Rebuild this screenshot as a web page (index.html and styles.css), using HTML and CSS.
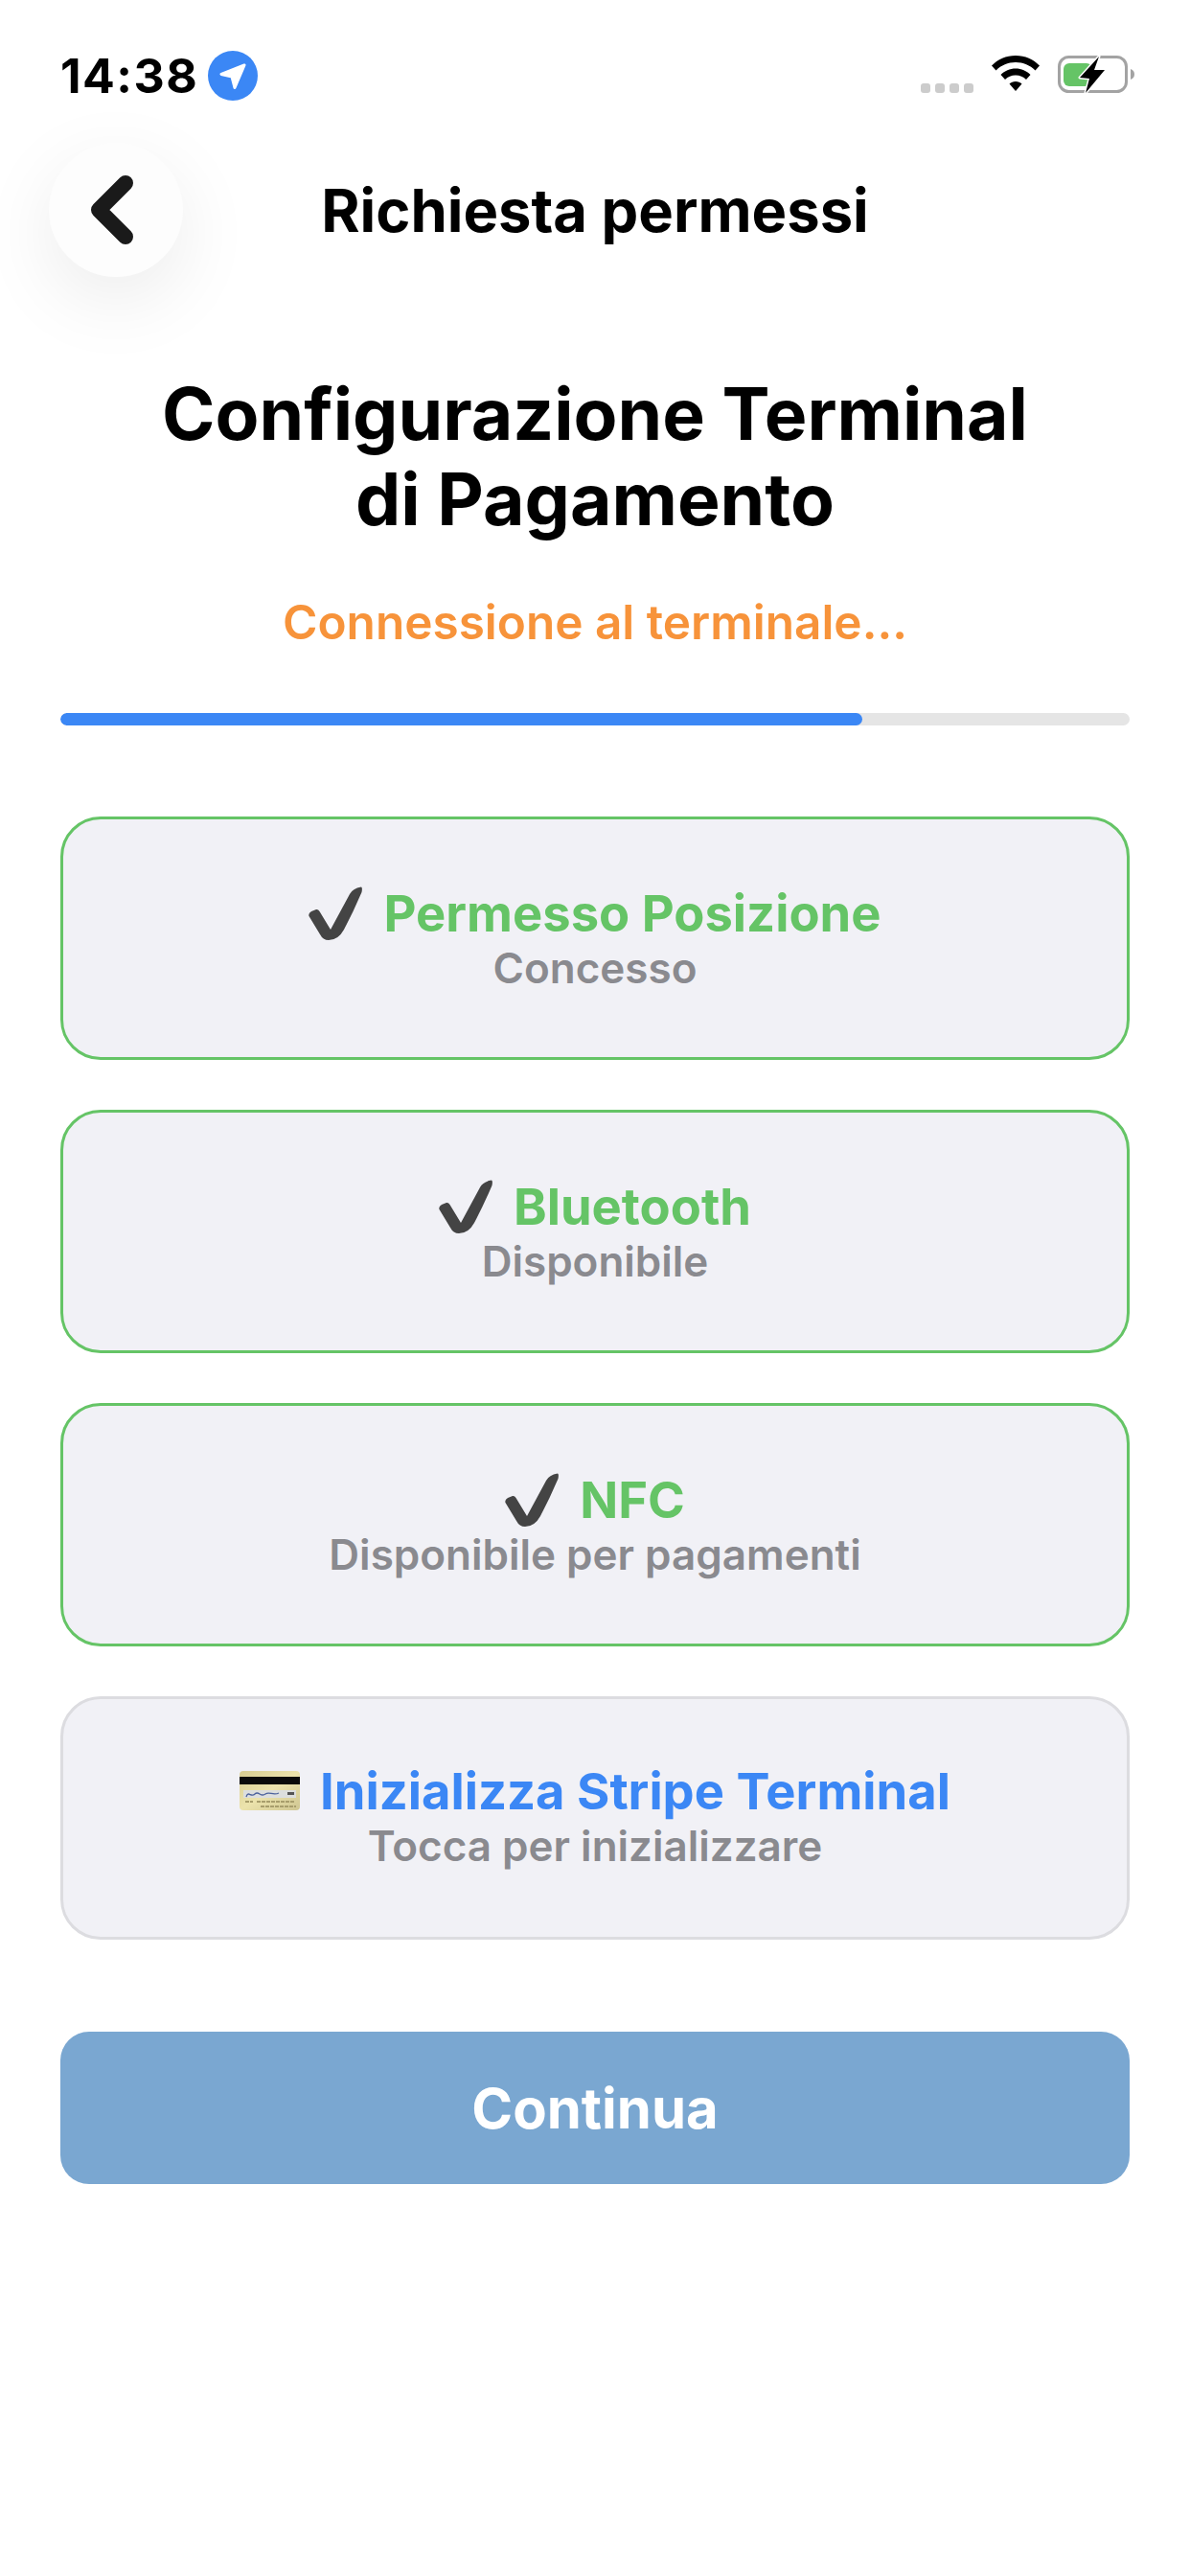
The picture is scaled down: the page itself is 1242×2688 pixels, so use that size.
FILE: index.html
```html
<!DOCTYPE html>
<html lang="it">
<head>
    <meta charset="UTF-8">
    <meta name="viewport" content="width=device-width, initial-scale=1.0">
    <title>Richiesta permessi</title>
    <link rel="stylesheet" href="styles.css">
</head>
<body>
    <div class="status-bar">
        <div class="status-left">
            <span class="clock">14:38</span>
            <svg class="location" viewBox="0 0 52 52" width="52" height="52">
                <circle cx="26" cy="26" r="26" fill="#3b87f5"/>
                <path d="M38 15 L14 24.500 L25 27 L28 38.500 Z" fill="#fff" stroke="#fff" stroke-width="3" stroke-linejoin="round"/>
            </svg>
        </div>
        <div class="status-right">
            <div class="signal"><i></i><i></i><i></i><i></i></div>
            <svg class="wifi" viewBox="0 0 52 38" width="52" height="38">
                <path d="M26 0 C16 0 7.500 4 1 10.500 L5.500 15.500 C11 10 18 7 26 7 C34 7 41 10 46.500 15.500 L51 10.500 C44.500 4 36 0 26 0 Z"/>
                <path d="M26 13.500 C20 13.500 14.500 16 10.500 20 L15 25 C18 22 21.500 20.500 26 20.500 C30.500 20.500 34 22 37 25 L41.500 20 C37.500 16 32 13.500 26 13.500 Z"/>
                <path d="M26 27 C23.500 27 21 28 19.500 29.500 L26 37 L32.500 29.500 C31 28 28.500 27 26 27 Z"/>
            </svg>
            <svg class="battery" viewBox="0 0 80 42" width="80" height="42">
                <rect x="1.500" y="1.500" width="70" height="36" rx="10" fill="none" stroke="#a3a3a3" stroke-width="3"/>
                <path d="M76 14 C79 15 80 17 80 19.500 C80 22 79 24 76 25 Z" fill="#a3a3a3"/>
                <rect x="6" y="8" width="30" height="24" rx="6" fill="#65c466"/>
                <path d="M43 1 L23 23 L33 24 L29 39 L49 15 L38 15 Z" fill="#000" stroke="#fff" stroke-width="3" stroke-linejoin="round" paint-order="stroke"/>
            </svg>
        </div>
    </div>

    <div class="nav-bar">
        <button type="button" class="back-btn">
            <svg viewBox="0 0 50 78" width="50" height="78">
                <path d="M39 11 L11 39 L39 67" fill="none" stroke="#1a1a1a" stroke-width="16" stroke-linecap="round" stroke-linejoin="round"/>
            </svg>
        </button>
        <div class="nav-title">Richiesta permessi</div>
    </div>

    <main class="content">
        <h1>Configurazione Terminal<br>di Pagamento</h1>
        <p class="progress-text">Connessione al terminale...</p>
        <div class="progress-track"><div class="progress-fill"></div></div>

        <div class="perm-list">
            <div class="perm-card done">
                <div class="perm-name">
                    <svg class="check" viewBox="0 0 56 56"><path d="M0.500 31 Q-0.500 28 3 26 L8 24 Q10 23.500 11.500 26 L23 45 L43 8 Q46 2 55 0.500 Q56.500 1 55.500 6 Q47 26 37 45 Q31 56 21 56 Q15 56 12 50 Z" fill="#444"/></svg>
                    <span>Permesso Posizione</span>
                </div>
                <div class="perm-state">Concesso</div>
            </div>
            <div class="perm-card done">
                <div class="perm-name">
                    <svg class="check" viewBox="0 0 56 56"><path d="M0.500 31 Q-0.500 28 3 26 L8 24 Q10 23.500 11.500 26 L23 45 L43 8 Q46 2 55 0.500 Q56.500 1 55.500 6 Q47 26 37 45 Q31 56 21 56 Q15 56 12 50 Z" fill="#444"/></svg>
                    <span>Bluetooth</span>
                </div>
                <div class="perm-state">Disponibile</div>
            </div>
            <div class="perm-card done">
                <div class="perm-name">
                    <svg class="check" viewBox="0 0 56 56"><path d="M0.500 31 Q-0.500 28 3 26 L8 24 Q10 23.500 11.500 26 L23 45 L43 8 Q46 2 55 0.500 Q56.500 1 55.500 6 Q47 26 37 45 Q31 56 21 56 Q15 56 12 50 Z" fill="#444"/></svg>
                    <span>NFC</span>
                </div>
                <div class="perm-state">Disponibile per pagamenti</div>
            </div>
            <div class="perm-card todo">
                <div class="perm-name">
                    <svg class="card-icon" viewBox="0 0 63 42">
                        <defs>
                            <linearGradient id="gold" x1="0" y1="0" x2="1" y2="1">
                                <stop offset="0" stop-color="#d8cd92"/>
                                <stop offset="0.500" stop-color="#ece3ac"/>
                                <stop offset="1" stop-color="#cfc692"/>
                            </linearGradient>
                        </defs>
                        <rect x="0" y="0" width="63" height="41" rx="4" fill="url(#gold)"/>
                        <rect x="0" y="6" width="63" height="8" fill="#0a0a0a"/>
                        <rect x="4" y="20" width="55" height="8" fill="#dcdedd"/>
                        <path d="M7 27 C9 20 12 28 16 24 C20 20 22 28 27 24 C31 21 35 26 41 23" fill="none" stroke="#4c629c" stroke-width="1.300"/>
                        <rect x="50" y="22" width="7" height="3" fill="#555"/>
                        <path d="M6 32 H14 M18 32 H57 M22 37 H59" stroke="#a89e6c" stroke-width="2" stroke-dasharray="4 1"/>
                    </svg>
                    <span>Inizializza Stripe Terminal</span>
                </div>
                <div class="perm-state">Tocca per inizializzare</div>
            </div>
        </div>

        <button type="button" class="continue-btn">Continua</button>
    </main>
</body>
</html>
```

FILE: styles.css
```css
* {
    box-sizing: border-box;
}

body {
    margin: 0;
    background-color: #fff;
    font-family: 'Inter', 'Liberation Sans', sans-serif;
    color: #000;
}

.status-bar {
    height: 105px;
    padding: 53px 58px 0 63px;
    display: flex;
    justify-content: space-between;
    align-items: flex-start;
}

.status-left {
    display: flex;
    align-items: center;
    gap: 10px;
}

.clock {
    font-size: 50px;
    font-weight: 700;
    line-height: 52px;
    letter-spacing: 1.500px;
}

.status-right {
    display: flex;
    align-items: flex-start;
    gap: 18px;
    padding-top: 5px;
}

.signal {
    display: flex;
    gap: 5px;
    margin-top: 29px;
}

.signal i {
    width: 10px;
    height: 10px;
    border-radius: 3px;
    background-color: #ccc;
}

.nav-bar {
    height: 140px;
    margin-top: 44px;
    padding-left: 51px;
    display: grid;
    grid-template-columns: 140px 1fr 191px;
    align-items: center;
}

.back-btn {
    width: 140px;
    height: 140px;
    padding: 0 8px 0 0;
    border: none;
    border-radius: 50%;
    background-color: #fdfdfd;
    box-shadow: 0 24px 80px rgba(0, 0, 0, 0.08);
    display: flex;
    align-items: center;
    justify-content: center;
}

.nav-title {
    font-size: 61.500px;
    font-weight: 700;
    text-align: center;
}

.content {
    padding: 0 63px;
}

h1 {
    margin: 98px 0 0;
    font-size: 75px;
    font-weight: 700;
    line-height: 89px;
    text-align: center;
}

.progress-text {
    margin: 53px 0 0;
    font-size: 49.500px;
    font-weight: 600;
    line-height: 62px;
    color: #f7933a;
    text-align: center;
}

.progress-track {
    height: 13px;
    margin-top: 64px;
    border-radius: 7px;
    background-color: #e5e5e5;
    overflow: hidden;
}

.progress-fill {
    width: 75%;
    height: 100%;
    border-radius: 7px;
    background-color: #3b87f5;
}

.perm-list {
    margin-top: 95px;
    display: flex;
    flex-direction: column;
    gap: 52px;
}

.perm-card {
    height: 254px;
    padding-top: 67px;
    border: 3px solid #65c466;
    border-radius: 42px;
    background-color: #f1f1f6;
    text-align: center;
}

.perm-card.todo {
    padding-top: 65px;
    border-color: #dcdce0;
}

.perm-name {
    display: flex;
    justify-content: center;
    align-items: center;
    gap: 22px;
    font-size: 52.500px;
    font-weight: 700;
    line-height: 62px;
    color: #65c466;
}

.todo .perm-name {
    gap: 21px;
    color: #3b87f5;
}

.check {
    width: 56px;
    height: 56px;
}

.card-icon {
    width: 63px;
    height: 42px;
}

.perm-state {
    font-size: 44px;
    font-weight: 600;
    line-height: 52px;
    color: #8a8a8f;
}

.continue-btn {
    display: block;
    width: 100%;
    height: 159px;
    margin-top: 96px;
    border: none;
    border-radius: 30px;
    background-color: #7aa7d1;
    color: #fff;
    font-family: inherit;
    font-size: 58px;
    font-weight: 700;
}
```
